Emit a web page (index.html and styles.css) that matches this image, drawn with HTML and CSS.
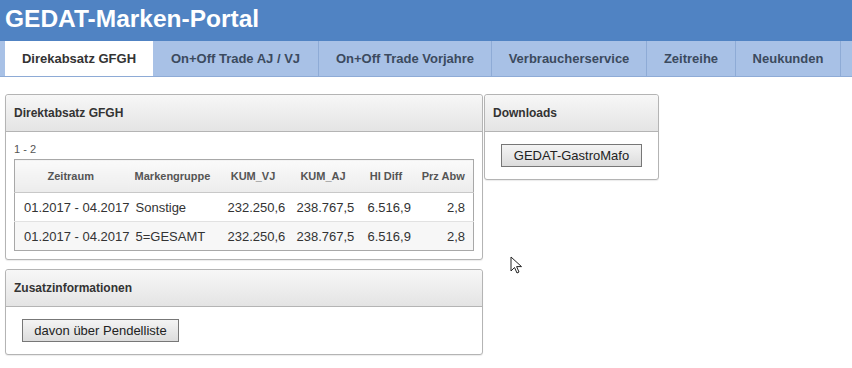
FILE: index.html
```html
<!DOCTYPE html>
<html lang="de">

<head>
  <meta charset="UTF-8">
  <title>GEDAT-Marken-Portal</title>
  <link rel="stylesheet" href="styles.css">
</head>

<body>
  <div class="top-bar">
    <h1 class="portal-title">GEDAT-Marken-Portal</h1>
  </div>

  <ul class="tabs">
    <li class="tab active">Direkabsatz GFGH</li>
    <li class="tab">On+Off Trade AJ / VJ</li>
    <li class="tab">On+Off Trade Vorjahre</li>
    <li class="tab">Verbraucherservice</li>
    <li class="tab">Zeitreihe</li>
    <li class="tab">Neukunden</li>
    <li class="tab tab-more"></li>
  </ul>

  <div class="content">
    <div class="col-left">
      <div class="panel">
        <div class="panel-head">Direktabsatz GFGH</div>
        <div class="panel-body">
          <div class="range">1 - 2</div>
          <table class="grid">
            <colgroup>
              <col style="width: 112px">
              <col style="width: 92px">
              <col style="width: 69px">
              <col style="width: 71px">
              <col style="width: 55px">
              <col>
            </colgroup>
            <thead>
              <tr>
                <th>Zeitraum</th>
                <th>Markengruppe</th>
                <th>KUM_VJ</th>
                <th>KUM_AJ</th>
                <th>HI Diff</th>
                <th>Prz Abw</th>
              </tr>
            </thead>
            <tbody>
              <tr>
                <td>01.2017 - 04.2017</td>
                <td>Sonstige</td>
                <td>232.250,6</td>
                <td>238.767,5</td>
                <td>6.516,9</td>
                <td class="num">2,8</td>
              </tr>
              <tr class="alt">
                <td>01.2017 - 04.2017</td>
                <td>5=GESAMT</td>
                <td>232.250,6</td>
                <td>238.767,5</td>
                <td>6.516,9</td>
                <td class="num">2,8</td>
              </tr>
            </tbody>
          </table>
        </div>
      </div>

      <div class="panel">
        <div class="panel-head">Zusatzinformationen</div>
        <div class="panel-body pad-btn">
          <button class="btn btn-wide">davon über Pendelliste</button>
        </div>
      </div>
    </div>

    <div class="col-right">
      <div class="panel">
        <div class="panel-head">Downloads</div>
        <div class="panel-body pad-center">
          <button class="btn">GEDAT-GastroMafo</button>
        </div>
      </div>
    </div>
  </div>

  <svg class="cursor" width="14" height="20" viewBox="0 0 14 20">
    <path d="M1 1 L1 15 L4.5 11.5 L7 17 L9 16 L6.6 10.6 L11.5 10.6 Z" fill="#fff" stroke="#222" stroke-width="1" stroke-linejoin="round"/>
  </svg>
</body>

</html>
```

FILE: styles.css
```css
* {
  box-sizing: border-box;
}

body {
  margin: 0;
  font-family: "Liberation Sans", Arial, sans-serif;
  color: #222;
  background: #fff;
  position: relative;
  height: 368px;
  overflow: hidden;
}

.top-bar {
  background: #5083c3;
  height: 41px;
  padding: 5px 5px 0;
}

.portal-title {
  margin: 0;
  color: #fff;
  font-size: 24.5px;
  font-weight: bold;
  line-height: 28px;
}

.tabs {
  list-style: none;
  margin: 0;
  padding: 0 0 0 5px;
  height: 36px;
  display: flex;
  overflow: hidden;
  background: #a8c1e6;
  border-bottom: 1px solid #8eabd6;
}

.tab {
  flex-shrink: 0;
  height: 36px;
  line-height: 36px;
  padding: 0 10px;
  font-size: 13px;
  font-weight: bold;
  color: #3b4a5e;
  border-right: 1px solid #8eabd6;
  white-space: nowrap;
  text-align: center;
}

.tab:nth-child(2) { width: 166px; }
.tab:nth-child(3) { width: 173px; }
.tab:nth-child(4) { width: 155px; }
.tab:nth-child(5) { width: 89px; }
.tab:nth-child(6) { width: 105px; }

.tab.active {
  width: 148px;
  background: #fff;
  color: #333;
  border-right: none;
  height: 37px;
}

.tab-more {
  width: 20px;
  padding: 0;
  border-right: none;
  border-left: 1px solid #8eabd6;
  margin-left: -1px;
}

.content {
  display: flex;
  gap: 1px;
  padding: 17px 5px 0;
  align-items: flex-start;
}

.col-left {
  width: 478px;
  display: flex;
  flex-direction: column;
  gap: 9px;
}

.col-right {
  width: 175px;
}

.panel {
  border: 1px solid #b4b4b4;
  border-radius: 3px;
  box-shadow: 0 1px 1px rgba(0, 0, 0, 0.08);
  background: #fff;
}

.panel-head {
  height: 37px;
  line-height: 36px;
  padding: 0 8px;
  font-size: 12px;
  font-weight: bold;
  color: #333;
  background: linear-gradient(#f7f7f7, #e4e4e4);
  border-bottom: 1px solid #b4b4b4;
  border-radius: 3px 3px 0 0;
}

.panel-body {
  padding: 10px 8px 8px;
}

.range {
  font-size: 11px;
  color: #555;
  line-height: 14px;
  margin-bottom: 3px;
}

.grid {
  width: 460px;
  border-collapse: collapse;
  border: 1px solid #a8a8a8;
  font-size: 13px;
  table-layout: fixed;
}

.grid th {
  height: 33px;
  font-size: 11px;
  font-weight: bold;
  color: #555;
  text-align: center;
  background: linear-gradient(#fafafa, #ececec);
  border-bottom: 1px solid #c8c8c8;
  white-space: nowrap;
}

.grid td {
  height: 29px;
  padding: 0 0 0 9px;
  color: #333;
  white-space: nowrap;
}

.grid td.num {
  text-align: right;
  padding: 0 8px 0 0;
}

.grid tbody tr + tr td {
  border-top: 1px solid #e2e2e2;
}

.grid tr.alt td {
  background: #f7f7f7;
}

.pad-center {
  padding: 12px 0 12px;
  text-align: center;
}

.pad-btn {
  padding: 12px 16px 12px;
}

.btn {
  font-family: "Liberation Sans", Arial, sans-serif;
  font-size: 13px;
  color: #222;
  height: 23px;
  padding: 0 10px;
  border: 1px solid #777;
  border-radius: 0;
  background: linear-gradient(#f4f4f4, #dcdcdc);
}

.btn-wide {
  width: 157px;
}

.col-right .btn {
  width: 141px;
}

.cursor {
  position: absolute;
  left: 510px;
  top: 256px;
}
```
